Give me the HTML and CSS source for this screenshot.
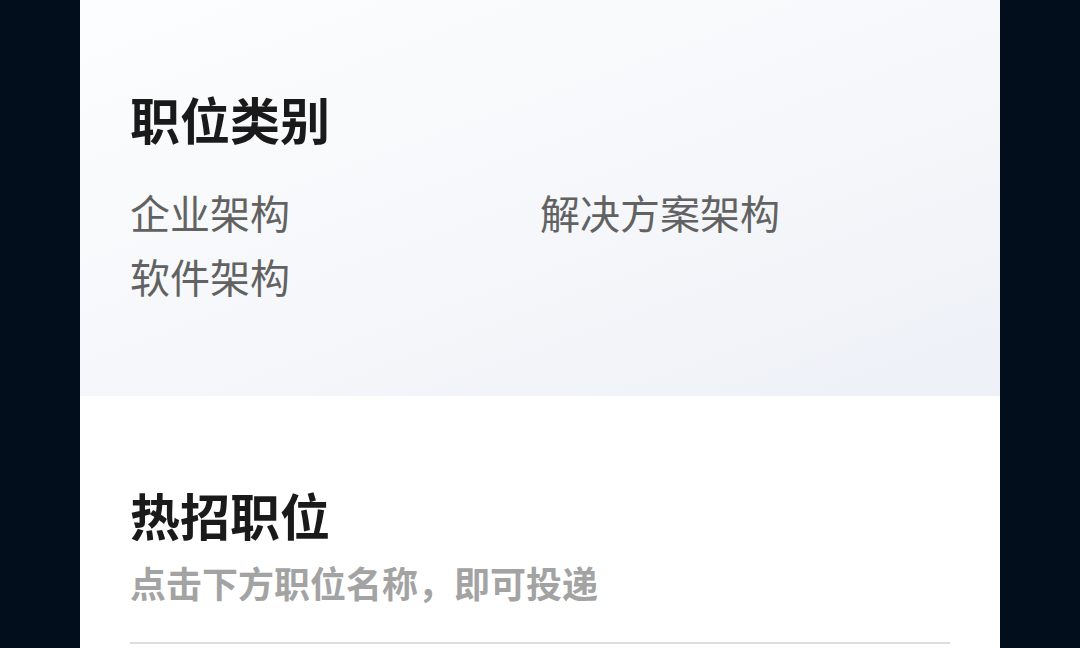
FILE: index.html
```html
<!DOCTYPE html>
<html lang="zh-CN">
<head>
  <meta charset="UTF-8" />
  <meta name="viewport" content="width=device-width, initial-scale=1.0"/>
  <title>职位类别</title>
  <link rel="stylesheet" href="styles.css">
</head>
<body>
  <div class="page">
    <section class="category">
      <h2>职位类别</h2>
      <div class="category-list">
        <a class="category-item">企业架构</a>
        <a class="category-item">解决方案架构</a>
        <a class="category-item">软件架构</a>
      </div>
    </section>
    <section class="hot">
      <h2>热招职位</h2>
      <div class="note">点击下方职位名称，即可投递</div>
      <div class="divider"></div>
    </section>
  </div>
</body>
</html>
```

FILE: styles.css
```css
html, body {
  height: 100%;
}
body {
  font-family: "Noto Sans CJK SC", "Noto Sans", sans-serif;
  background-color: #020e1c;
  margin: 0;
  padding: 0;
  overflow: hidden;
}
.page {
  width: 920px;
  margin: 0 auto;
  min-height: 100%;
  background-color: white;
}
h2 {
  margin: 0;
  font-size: 50px;
  line-height: 60px;
  font-weight: 700;
  color: #1a1a1a;
}
.category {
  padding: 88px 50px 88px;
  background: linear-gradient(160deg, #fcfdfe 0%, #f5f7fa 55%, #edf0f7 100%);
}
.category-list {
  display: grid;
  grid-template-columns: 1fr 1fr;
  margin-top: 32px;
}
.category-item {
  font-size: 40px;
  line-height: 64px;
  color: #626262;
  cursor: pointer;
}
.hot {
  padding: 88px 50px 0;
}
.note {
  margin-top: 13px;
  font-size: 36px;
  line-height: 50px;
  font-weight: 700;
  color: #a3a3a3;
}
.divider {
  margin-top: 35px;
  height: 2px;
  background-color: #dcdcdc;
}
```
